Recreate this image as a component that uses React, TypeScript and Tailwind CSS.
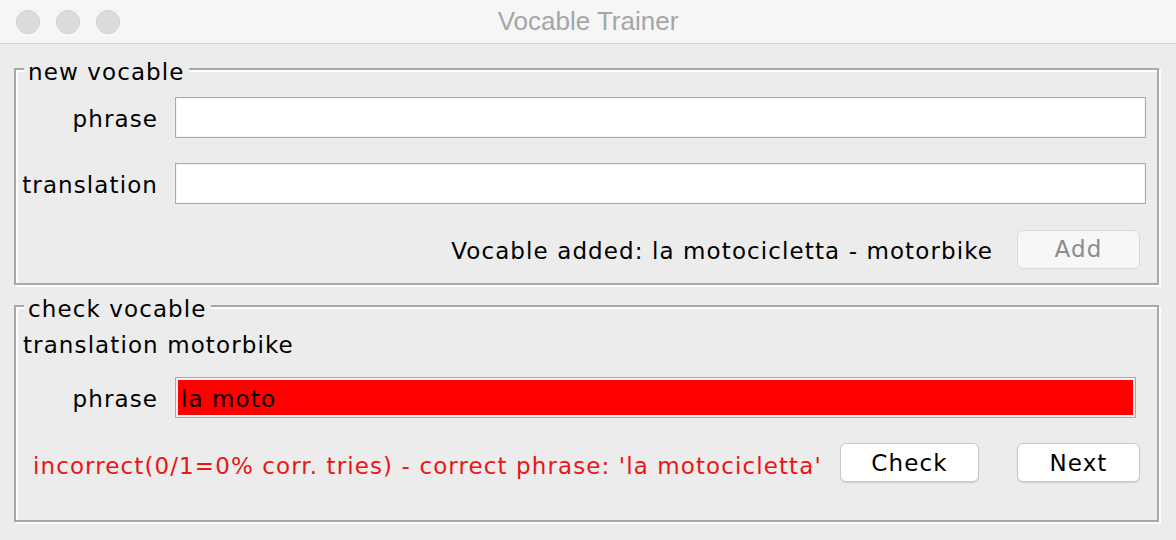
export default function App() {
  const field = 'flex-1 h-[41px] border border-[#ababab] bg-white shadow-[inset_0_0_0_1px_#f4f4f4]';

  return (
    <div className="w-[1176px] h-[540px] bg-[#ececec] flex flex-col font-['DejaVu_Sans',sans-serif] text-[23px] tracking-[1.1px] text-black overflow-hidden">
      {/* title bar */}
      <div className="h-[44px] bg-[#f6f6f6] border-b border-[#d0d0d0] grid grid-cols-[1fr_auto_1fr] items-center">
        <div className="flex items-center gap-[16px] pl-[16px]">
          <span className="w-[24px] h-[24px] rounded-full bg-[#dcdcdc] border border-[#d0d0d0]" />
          <span className="w-[24px] h-[24px] rounded-full bg-[#dcdcdc] border border-[#d0d0d0]" />
          <span className="w-[24px] h-[24px] rounded-full bg-[#dcdcdc] border border-[#d0d0d0]" />
        </div>
        <div className="font-['Liberation_Sans',sans-serif] tracking-normal text-[26px] leading-[30px] text-[#a6a6a6] pb-[1px]">Vocable Trainer</div>
        <div />
      </div>

      <div className="pl-[14px] pr-[17px] pt-[24px] flex flex-col">
        {/* new vocable */}
        <div className="relative h-[217px] border-2 border-[#a8a8a8] shadow-[inset_2px_2px_0_#fff,2px_2px_0_#fff]">
          <span className="absolute -top-[11px] left-[8px] px-[4px] bg-[#ececec] leading-[27px]">new vocable</span>
          <div className="flex flex-col gap-[25px] pt-[27px]">
            <div className="flex items-center h-[41px] pr-[11px]">
              <label className="w-[142px] text-right pt-[3px]">phrase</label>
              <div className={`ml-[17px] ${field}`} />
            </div>
            <div className="flex items-center h-[41px] pr-[11px]">
              <label className="w-[142px] text-right pt-[3px]">translation</label>
              <div className={`ml-[17px] ${field}`} />
            </div>
            <div className="flex items-center justify-end h-[41px] pr-[17px]">
              <span className="pt-[3px]">Vocable added: la motocicletta - motorbike</span>
              <button className="ml-[24px] w-[123px] h-[39px] rounded-[6px] bg-[#f7f7f7] border border-[#dadada] text-[#8c8c8c]">Add</button>
            </div>
          </div>
        </div>

        {/* check vocable */}
        <div className="relative mt-[20px] h-[217px] border-2 border-[#a8a8a8] shadow-[inset_2px_2px_0_#fff,2px_2px_0_#fff]">
          <span className="absolute -top-[11px] left-[8px] px-[4px] bg-[#ececec] leading-[27px]">check vocable</span>
          <div className="flex flex-col pt-[25px]">
            <div className="pl-[7px] leading-[27px]">translation motorbike</div>
            <div className="flex items-center h-[41px] mt-[18px] pr-[21px]">
              <label className="w-[142px] text-right pt-[3px]">phrase</label>
              <div className="ml-[17px] flex-1 h-[41px] border border-[#ababab] bg-[#ff0000] shadow-[inset_0_0_0_2px_#efefef] flex items-center pl-[5px] pt-[3px]">
                la moto
              </div>
            </div>
            <div className="flex items-center h-[39px] mt-[25px] pl-[17px] pr-[17px]">
              <span className="flex-1 text-[#ea1515] pt-[7px]">incorrect(0/1=0% corr. tries) - correct phrase: 'la motocicletta'</span>
              <button className="w-[139px] h-[39px] rounded-[6px] bg-white border border-[#c8c8c8] shadow-[0_1px_1px_rgba(0,0,0,0.12)] pt-[1px]">Check</button>
              <button className="ml-[38px] w-[123px] h-[39px] rounded-[6px] bg-white border border-[#c8c8c8] shadow-[0_1px_1px_rgba(0,0,0,0.12)] pt-[1px]">Next</button>
            </div>
          </div>
        </div>
      </div>
    </div>
  );
}
